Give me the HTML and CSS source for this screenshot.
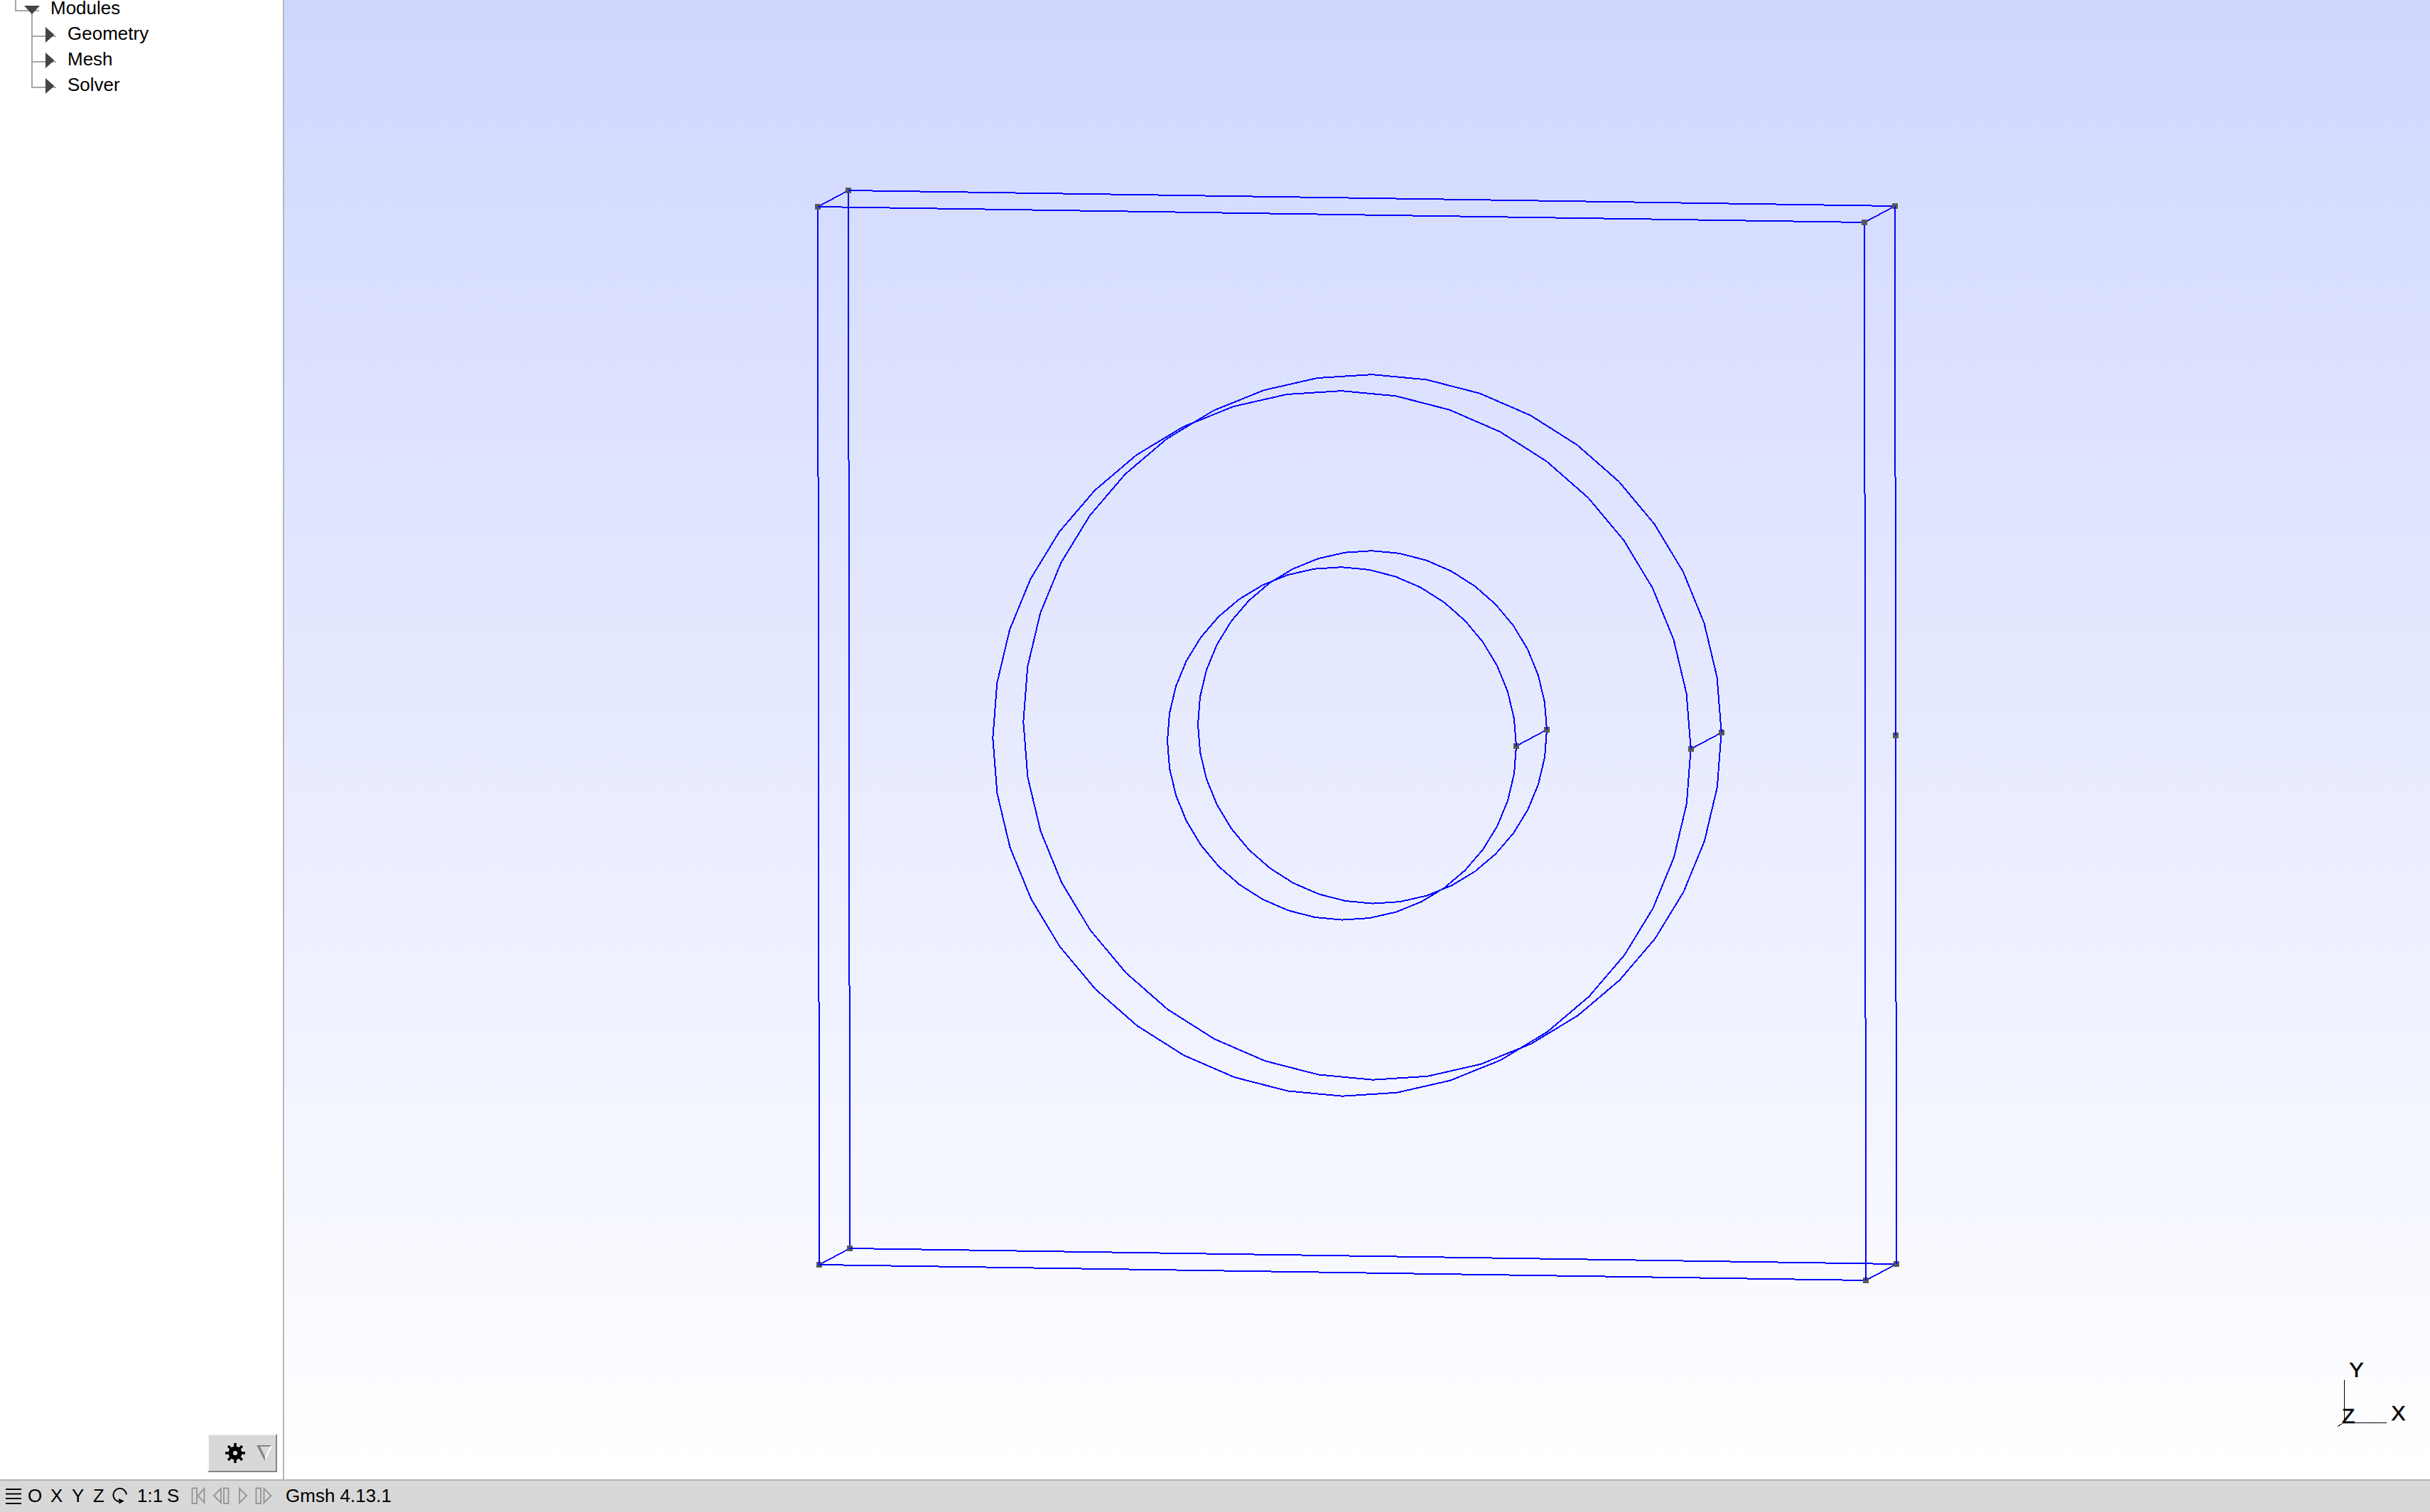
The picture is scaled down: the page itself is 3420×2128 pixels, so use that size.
FILE: index.html
```html
<!DOCTYPE html>
<html lang="en">
<head>
<meta charset="utf-8">
<title>Gmsh</title>
<link rel="stylesheet" href="styles.css">
</head>
<body>
<div class="app">
  <div class="main">
    <aside class="sidebar">
      <ul class="tree">
        <li class="row">
          <svg class="twig root" viewBox="0 0 71 36"><path class="guide" d="M22 0V22H55M45 26V36"/><path class="arrow" d="M34 15H56L45 27Z"/></svg>
          <span>Modules</span>
        </li>
        <li class="row">
          <svg class="twig" viewBox="0 0 95 36"><path class="guide" d="M45 0V36M45 22H79"/><path class="arrow" d="M64 9V31L76.500 20Z"/></svg>
          <span>Geometry</span>
        </li>
        <li class="row">
          <svg class="twig" viewBox="0 0 95 36"><path class="guide" d="M45 0V36M45 22H79"/><path class="arrow" d="M64 9V31L76.500 20Z"/></svg>
          <span>Mesh</span>
        </li>
        <li class="row">
          <svg class="twig" viewBox="0 0 95 36"><path class="guide" d="M45 0V22H79"/><path class="arrow" d="M64 9V31L76.500 20Z"/></svg>
          <span>Solver</span>
        </li>
      </ul>
      <button class="options" type="button" aria-label="Options">
        <svg viewBox="0 0 94 50">
          <g transform="translate(37 25)">
            <circle r="6.3" fill="none" stroke="#000" stroke-width="6.4"/>
            <path d="M0-14V-7M0 7V14M-14 0H-7M7 0H14M-9.9-9.9L-6-6M9.9-9.9L6-6M-9.9 9.9L-6 6M9.9 9.9L6 6" stroke="#000" stroke-width="3.6"/>
          </g>
          <path d="M67 14H90L88.500 16H72L80 32L78.500 36Z" fill="#858585"/>
          <path d="M90 14L79 36V31L86.500 15Z" fill="#fafafa"/>
        </svg>
      </button>
    </aside>
    <main class="view">
      <svg class="scene" viewBox="400 0 3020 2082">
        <defs>
          <polygon id="ring" points="1,0 .9877,-.1564 .9511,-.309 .891,-.454 .809,-.5878 .7071,-.7071 .5878,-.809 .454,-.891 .309,-.9511 .1564,-.9877 0,-1 -.1564,-.9877 -.309,-.9511 -.454,-.891 -.5878,-.809 -.7071,-.7071 -.809,-.5878 -.891,-.454 -.9511,-.309 -.9877,-.1564 -1,0 -.9877,.1564 -.9511,.309 -.891,.454 -.809,.5878 -.7071,.7071 -.5878,.809 -.454,.891 -.309,.9511 -.1564,.9877 0,1 .1564,.9877 .309,.9511 .454,.891 .5878,.809 .7071,.7071 .809,.5878 .891,.454 .9511,.309 .9877,.1564"/>
          <rect id="pt" x="-4" y="-4" width="8" height="8"/>
        </defs>
        <g class="edges">
          <path d="M1151 291L2624 313L2626 1802L1153 1780Z"/>
          <path d="M1194 268L2667 290L2669 1779L1196 1757Z"/>
          <path class="thin" d="M1151 291L1194 268M2624 313L2667 290M2626 1802L2669 1779M1153 1780L1196 1757M2134 1050L2177 1027M2380 1054L2423 1031"/>
          <use href="#ring" transform="matrix(491.2 7.4 .67 496.3 1888.5 1046.4)"/>
          <use href="#ring" transform="matrix(491.2 7.4 .67 496.3 1931.5 1023.4)"/>
          <use href="#ring" transform="matrix(245.5 3.7 .33 248.2 1888.5 1046.4)"/>
          <use href="#ring" transform="matrix(245.5 3.7 .33 248.2 1931.5 1023.4)"/>
        </g>
        <g class="points">
          <use href="#pt" x="1151" y="291"/><use href="#pt" x="1194" y="268"/>
          <use href="#pt" x="2624" y="313"/><use href="#pt" x="2667" y="290"/>
          <use href="#pt" x="1153" y="1780"/><use href="#pt" x="1196" y="1757"/>
          <use href="#pt" x="2626" y="1802"/><use href="#pt" x="2669" y="1779"/>
          <use href="#pt" x="2134" y="1050"/><use href="#pt" x="2177" y="1027"/>
          <use href="#pt" x="2380" y="1054"/><use href="#pt" x="2423" y="1031"/>
          <use href="#pt" x="2668" y="1035"/>
        </g>
        <path class="tips" d="M1151 291H1156M1194 268H1199M1153 1775V1780H1158M1195 1757H1201M2626 1797V1802M2669 1774V1779M2134 1045V1050M2177 1022V1027M2380 1049V1054M2423 1026V1031M2667 290V295M2668 1030V1035"/>
        <g class="axes">
          <path d="M3299.500 1942V2002.500H3359M3299 2002L3290 2007.500"/>
          <text x="3306.500" y="1938">Y</text>
          <text x="3365.500" y="1999">X</text>
          <text x="3296" y="2003">Z</text>
        </g>
      </svg>
    </main>
  </div>
  <footer class="status">
    <svg class="ic menu" viewBox="0 0 39 44"><path d="M8 12H30M8 18.500H30M8 25H30M8 32H30" stroke="#000" stroke-width="2"/></svg>
    <span class="o">O</span><span class="x">X</span><span class="y">Y</span><span class="z">Z</span>
    <svg class="ic spin" viewBox="2 0 40 44"><path d="M27 19.500A9.300 9.300 0 1 0 16 29.300" fill="none" stroke="#000" stroke-width="2"/><path d="M16 25L24 28.500L16.500 32.500Z"/></svg>
    <span class="ratio">1:1</span><span class="s">S</span>
    <svg class="ic nav" viewBox="265 0 135 44"><path d="M270.500 10.500H277V32H270.500ZM287.500 11L278.500 21L287.500 31ZM311 11L301 21L311 31ZM315 10.500H321.500V32H315ZM337 11L347 21L337 31ZM360.500 10.500H367V32H360.500ZM371.500 11L381.500 21L371.500 31Z"/></svg>
    <span class="message">Gmsh 4.13.1</span>
  </footer>
</div>
</body>
</html>
```
FILE: styles.css
```css
* { box-sizing: border-box; }
body {
  margin: 0;
  font: 26px/36px "Liberation Sans", Arial, sans-serif;
  color: #000;
  background: #fff;
}
.app { display: flex; flex-direction: column; height: 100vh; overflow: hidden; }
.main { display: flex; flex: 1; min-height: 0; }
svg { display: block; flex: none; }

.sidebar {
  display: flex;
  flex-direction: column;
  justify-content: space-between;
  width: 400px;
  padding: 0 8px 10px 0;
  border-right: 2px solid #b8b8b8;
  overflow: hidden;
}
.tree { margin: -7px 0 0; padding: 0; list-style: none; }
.row { display: flex; height: 36px; }
.twig { width: 95px; height: 36px; }
.twig.root { width: 71px; }
.guide { fill: none; stroke: #a6a6a6; stroke-width: 2; }
.arrow { fill: #444; }
.options {
  align-self: flex-end;
  width: 98px;
  height: 54px;
  padding: 0;
  background: #d8d8d8;
  border: 2px solid;
  border-color: #f8f8f8 #858585 #858585 #f8f8f8;
}

.view { flex: 1; background: linear-gradient(#d0d7ff, #fff); }
.scene { width: 3020px; height: 2082px; }
.edges { fill: none; stroke: #00f; shape-rendering: crispEdges; }
.edges > * { stroke-width: 2; vector-effect: non-scaling-stroke; }
#ring { vector-effect: non-scaling-stroke; stroke-width: 2; }
.edges .thin { stroke-width: 1.8; }
.points { fill: #595959; shape-rendering: crispEdges; }
.tips { fill: none; stroke: #00f; stroke-width: 2; shape-rendering: crispEdges; }
.axes path { fill: none; stroke: #000; stroke-width: 1; shape-rendering: crispEdges; }
.axes text { font-size: 30px; stroke: #000; stroke-width: .6; }

.status {
  display: flex;
  height: 46px;
  border-top: 2px solid #b4b4b4;
  background: #d8d8d8;
  line-height: 42px;
  white-space: pre;
}
.ic { height: 44px; }
.menu { width: 39px; }
.o { width: 32px; }
.x { width: 30px; }
.y { width: 30px; }
.z { width: 22px; }
.spin { width: 40px; }
.ratio { width: 42px; }
.s { width: 30px; }
.nav { width: 135px; fill: none; stroke: #999; stroke-width: 2; }
.message { padding-left: 2px; }
```
